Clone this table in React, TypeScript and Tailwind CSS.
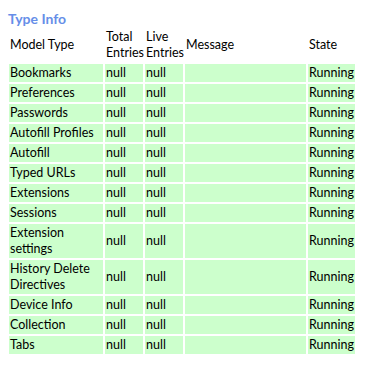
const ROWS = [
  "Bookmarks",
  "Preferences",
  "Passwords",
  "Autofill Profiles",
  "Autofill",
  "Typed URLs",
  "Extensions",
  "Sessions",
  "Extension settings",
  "History Delete Directives",
  "Device Info",
  "Collection",
  "Tabs",
];

export default function App() {
  return (
    <div className="min-h-screen bg-white pl-[7px] pt-[11px] text-[12.5px] leading-[16px] text-black" style={{ fontFamily: "'Segoe UI', Lato, 'Open Sans', sans-serif" }}>
      <h2 className="pl-[1px] text-[14px] font-bold leading-[15px] text-[#668ee8]">Type Info</h2>
      <table className="w-[350px] table-fixed border-separate border-spacing-[2px]">
        <colgroup>
          <col className="w-[94px]" />
          <col className="w-[38px]" />
          <col className="w-[38px]" />
          <col className="w-[121px]" />
          <col className="w-[47px]" />
        </colgroup>
        <thead>
          <tr>
            <th className="p-[1px] text-left font-normal align-middle">Model Type</th>
            <th className="p-[1px] text-left font-normal align-middle">Total Entries</th>
            <th className="p-[1px] text-left font-normal align-middle">Live Entries</th>
            <th className="p-[1px] text-left font-normal align-middle">Message</th>
            <th className="p-[1px] text-left font-normal align-middle">State</th>
          </tr>
        </thead>
        <tbody>
          {ROWS.map((name) => (
            <tr key={name} className="bg-[#ccffcc]">
              <td className="p-[1px] align-middle">{name}</td>
              <td className="p-[1px] align-middle">null</td>
              <td className="p-[1px] align-middle">null</td>
              <td className="p-[1px] align-middle"></td>
              <td className="p-[1px] align-middle">Running</td>
            </tr>
          ))}
        </tbody>
      </table>
    </div>
  );
}
